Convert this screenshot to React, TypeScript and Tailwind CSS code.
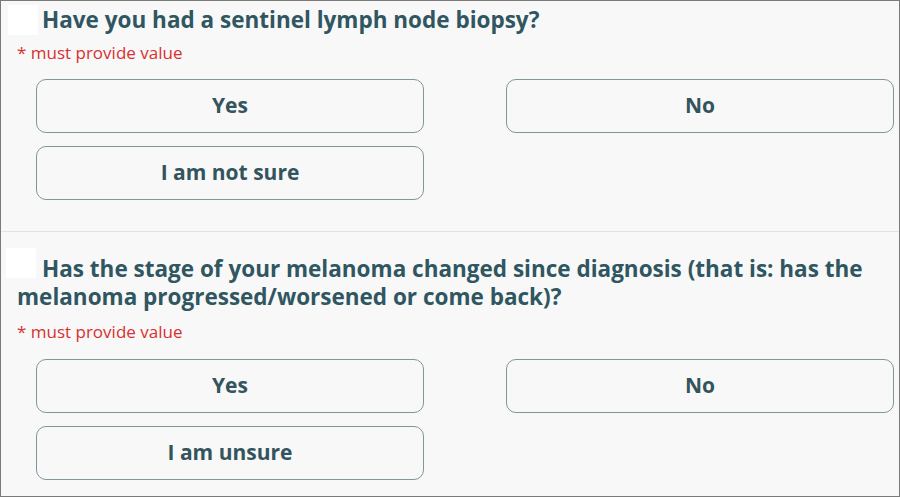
import React from "react";

const font = { fontFamily: '"Open Sans", "Noto Sans", sans-serif' };

function Btn({ label }: { label: string }) {
  return (
    <button className="h-[54px] w-full rounded-[10px] border border-[#7d979b] bg-[#f8f8f8] text-[21px] font-bold text-[#33545c]">
      {label}
    </button>
  );
}

export default function App() {
  return (
    <div
      style={font}
      className="h-[497px] w-[900px] overflow-hidden border border-[#7a7a7a] bg-[#f8f8f8]"
    >
      <section className="pt-[4px] pb-[31px]">
        <h2 className="pl-[7px] text-[22.5px] font-bold leading-[28px] text-[#2f5661]">
          <span className="mr-[4px] inline-block h-[30px] w-[30px] bg-white align-[-7px]" />
          Have you had a sentinel lymph node biopsy?
        </h2>
        <div className="mt-[7px] pl-[16px] text-[17px] leading-[22px] text-[#d9302f]">
          * must provide value
        </div>
        <div className="mt-[15px] grid grid-cols-[388px_388px] gap-x-[82px] gap-y-[13px] pl-[35px]">
          <Btn label="Yes" />
          <Btn label="No" />
          <Btn label="I am not sure" />
        </div>
      </section>
      <div className="h-px bg-[#e3e3e3]" />
      <section className="pt-[16px]">
        <h2 className="pl-[16px] text-[22.5px] font-bold leading-[28px] text-[#2f5661]">
          <span className="ml-[-11px] mr-[6px] inline-block h-[30px] w-[30px] bg-white align-[-1px]" />
          Has the stage of your melanoma changed since diagnosis (that is: has the melanoma progressed/worsened or come back)?
        </h2>
        <div className="mt-[10px] pl-[16px] text-[17px] leading-[22px] text-[#d9302f]">
          * must provide value
        </div>
        <div className="mt-[16px] grid grid-cols-[388px_388px] gap-x-[82px] gap-y-[13px] pl-[35px]">
          <Btn label="Yes" />
          <Btn label="No" />
          <Btn label="I am unsure" />
        </div>
      </section>
    </div>
  );
}
